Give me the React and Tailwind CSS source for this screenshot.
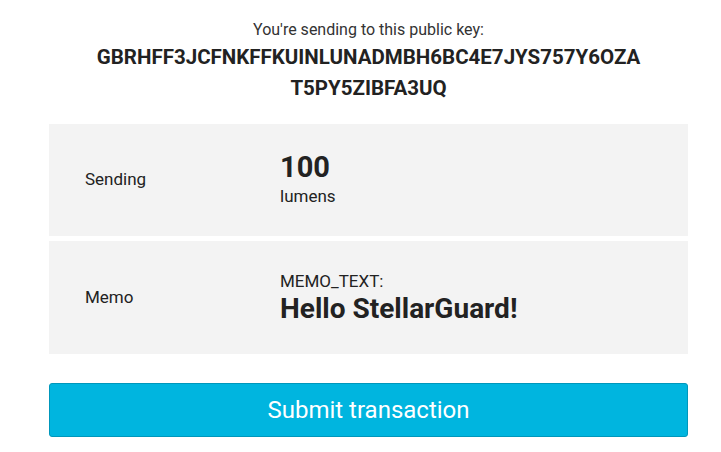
import React from 'react';

export default function App() {
  return (
    <div className="w-[721px] h-[452px] bg-white text-[#222] font-['Roboto',sans-serif]">
      <div className="pt-[19px] pl-[49px] pr-[33px]">
        <p className="text-center text-[16px] leading-[22px] text-[#333]">You're sending to this public key:</p>
        <p className="text-center text-[20.5px] leading-[31px] font-bold mt-[1px]">
          GBRHFF3JCFNKFFKUINLUNADMBH6BC4E7JYS757Y6OZA
          <br />
          T5PY5ZIBFA3UQ
        </p>

        <div className="mt-[20px] flex flex-col gap-[5px]">
          <div className="h-[112px] bg-[#f3f3f3] flex items-center">
            <div className="w-[231px] pl-[36px] text-[17px]">Sending</div>
            <div className="flex flex-col pb-[4px]">
              <span className="text-[29px] leading-[36px] font-bold">100</span>
              <span className="text-[17px] leading-[22px]">lumens</span>
            </div>
          </div>
          <div className="h-[113px] bg-[#f3f3f3] flex items-center">
            <div className="w-[231px] pl-[36px] text-[17px]">Memo</div>
            <div className="flex flex-col pt-[2px]">
              <span className="text-[17px] leading-[20px]">MEMO_TEXT:</span>
              <span className="text-[28px] leading-[36px] font-bold">Hello StellarGuard!</span>
            </div>
          </div>
        </div>

        <button className="mt-[29px] w-full h-[54px] rounded-[3px] bg-[#00b5df] border border-[#0097bb] text-white text-[24px]">
          Submit transaction
        </button>
      </div>
    </div>
  );
}
